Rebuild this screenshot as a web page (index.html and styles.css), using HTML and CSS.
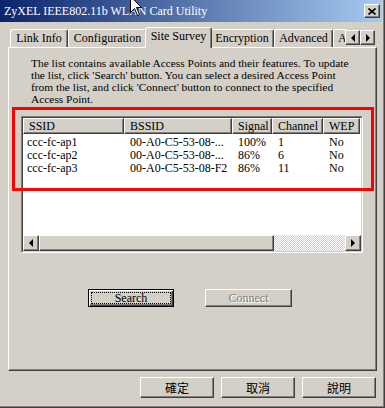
FILE: index.html
```html
<html>
    <head>
        <title>ZyXEL IEEE802.11b WLAN Card Utility</title>
        <link rel="stylesheet" href="styles.css">
    </head>
    <body>
        <div class="window">
            <div class="titlebar">
                <span class="title">ZyXEL IEEE802.11b WLAN Card Utility</span>
                <span class="close-btn">
                    <svg width="8" height="7" viewBox="0 0 8 7"><path d="M0.5 0.5 L7.5 6.5 M7.5 0.5 L0.5 6.5" stroke="#000" stroke-width="1.6" fill="none"/></svg>
                </span>
            </div>

            <div class="tabstrip">
                <div class="tabs">
                    <div class="tab w-link">Link Info</div>
                    <div class="tab w-config">Configuration</div>
                    <div class="tab selected">Site Survey</div>
                    <div class="tab w-enc">Encryption</div>
                    <div class="tab w-adv">Advanced</div>
                    <div class="tab w-about">A</div>
                </div>
                <div class="tab-scroll">
                    <span class="arrow-btn"><i class="tri-left"></i></span>
                    <span class="arrow-btn"><i class="tri-right"></i></span>
                </div>
            </div>

            <div class="panel">
                <p class="intro">The list contains available Access Points and their features. To update<br>the list, click 'Search' button. You can select a desired Access Point<br>from the list, and click 'Connect' button to connect to the specified<br>Access Point.</p>

                <div class="listview">
                    <div class="lv-inner">
                        <div class="lv-header cols">
                            <span class="hcell">SSID</span>
                            <span class="hcell">BSSID</span>
                            <span class="hcell">Signal</span>
                            <span class="hcell">Channel</span>
                            <span class="hcell">WEP</span>
                        </div>
                        <div class="lv-body">
                            <div class="row cols">
                                <span class="first">ccc-fc-ap1</span><span>00-A0-C5-53-08-...</span><span>100%</span><span>1</span><span>No</span>
                            </div>
                            <div class="row cols">
                                <span class="first">ccc-fc-ap2</span><span>00-A0-C5-53-08-...</span><span>86%</span><span>6</span><span>No</span>
                            </div>
                            <div class="row cols">
                                <span class="first">ccc-fc-ap3</span><span>00-A0-C5-53-08-F2</span><span>86%</span><span>11</span><span>No</span>
                            </div>
                        </div>
                        <div class="hscroll">
                            <span class="arrow-btn sb"><i class="tri-left"></i></span>
                            <span class="thumb"></span>
                            <span class="track"></span>
                            <span class="arrow-btn sb"><i class="tri-right"></i></span>
                        </div>
                    </div>
                </div>

                <div class="actions">
                    <button class="btn default"><span class="focus">Search</span></button>
                    <button class="btn disabled">Connect</button>
                </div>
            </div>

            <div class="dialog-buttons">
                <button class="btn cjk">確定</button>
                <button class="btn cjk">取消</button>
                <button class="btn cjk">說明</button>
            </div>

            <!-- annotation drawn over the list -->
            <div class="highlight"></div>
            <svg class="cursor" width="13" height="21" viewBox="0 0 13 21">
                <path d="M0.5 0.5 L0.5 16.5 L4.5 12.5 L7.5 19.5 L9.5 18.5 L6.5 11.5 L11.5 11.5 Z" fill="#fff" stroke="#000" stroke-width="1"/>
            </svg>
        </div>
    </body>
</html>
```

FILE: styles.css
```css
* {
    box-sizing: border-box;
}
body {
    margin: 0;
    background: #d4d0c8;
    font-family: "Liberation Serif", "Noto Sans CJK TC", serif;
    font-size: 12px;
    color: #000;
}
.window {
    position: relative;
    width: 385px;
    height: 408px;
    overflow: hidden;
    border-right: 1px solid #404040;
    border-bottom: 1px solid #404040;
    box-shadow: inset -1px -1px #808080;
}
.titlebar {
    display: flex;
    align-items: center;
    width: 382px;
    height: 22px;
    padding-left: 4px;
    background: linear-gradient(to right, #0a246a, #a6caf0);
    color: #fff;
}
.title {
    font-size: 12px;
    padding-top: 1px;
}
.close-btn {
    display: flex;
    align-items: center;
    justify-content: center;
    margin-left: auto;
    margin-right: 2px;
    width: 16px;
    height: 14px;
    background: #d4d0c8;
    border: 1px solid;
    border-color: #fff #404040 #404040 #fff;
    box-shadow: inset -1px -1px #808080;
}

/* tabs */
.tabstrip {
    position: relative;
    z-index: 1;
    display: flex;
    margin: 5px 0 -1px 10px;
    height: 21px;
}
.tabs {
    display: flex;
    align-items: flex-start;
    width: 336px;
    height: 21px;
    overflow: hidden;
}
.tab {
    flex-shrink: 0;
    height: 18px;
    margin-top: 2px;
    line-height: 16px;
    text-align: center;
    background: #d4d0c8;
    border-top: 1px solid #fff;
    border-left: 1px solid #fff;
    border-right: 1px solid #404040;
    border-radius: 3px 3px 0 0;
    box-shadow: inset -1px 0 #808080;
    white-space: nowrap;
}
.w-link { width: 58px; }
.w-config { width: 79px; }
.w-enc { width: 64px; }
.w-adv { width: 59px; }
.w-about { width: 60px; text-align: left; padding-left: 4px; }
.tab.selected {
    position: relative;
    z-index: 2;
    width: 67px;
    height: 21px;
    margin: 0 -2px;
    line-height: 17px;
}
.tab-scroll {
    display: flex;
    margin: 3px 0 0 -1px;
    height: 15px;
}
.arrow-btn {
    display: flex;
    align-items: center;
    justify-content: center;
    width: 15px;
    height: 15px;
    background: #d4d0c8;
    border: 1px solid;
    border-color: #fff #404040 #404040 #fff;
    box-shadow: inset -1px -1px #808080;
}
.tri-left {
    width: 0;
    height: 0;
    border-top: 4px solid transparent;
    border-bottom: 4px solid transparent;
    border-right: 4px solid #000;
}
.tri-right {
    width: 0;
    height: 0;
    border-top: 4px solid transparent;
    border-bottom: 4px solid transparent;
    border-left: 4px solid #000;
}

/* page */
.panel {
    margin-left: 8px;
    width: 369px;
    height: 324px;
    padding: 9px 13px 0 12px;
    border: 1px solid;
    border-color: #fff #404040 #404040 #fff;
    box-shadow: inset -1px -1px #808080;
}
.intro {
    margin: 0 0 11px 10px;
    font-size: 11.4px;
    line-height: 12px;
    white-space: nowrap;
}
.listview {
    height: 137px;
    border: 1px solid;
    border-color: #808080 #fff #fff #808080;
}
.lv-inner {
    display: flex;
    flex-direction: column;
    height: 100%;
    background: #fff;
    border: 1px solid;
    border-color: #404040 #d4d0c8 #d4d0c8 #404040;
}
.cols {
    display: grid;
    grid-template-columns: 101px 108px 40px 51px 37px;
}
.lv-header {
    height: 16px;
}
.hcell {
    background: #d4d0c8;
    line-height: 14px;
    padding-left: 5px;
    border-top: 1px solid #fff;
    border-left: 1px solid #fff;
    border-right: 1px solid #404040;
    border-bottom: 1px solid #404040;
    box-shadow: inset -1px -1px #808080;
    white-space: nowrap;
}
.lv-body {
    flex: 1;
    padding-top: 2px;
}
.row {
    height: 13px;
    line-height: 13px;
    white-space: nowrap;
}
.row span {
    padding-left: 6px;
}
.row span.first {
    padding-left: 4px;
}
.hscroll {
    display: flex;
    height: 16px;
}
.arrow-btn.sb {
    width: 16px;
    height: 16px;
}
.thumb {
    width: 235px;
    background: #d4d0c8;
    border: 1px solid;
    border-color: #fff #404040 #404040 #fff;
    box-shadow: inset -1px -1px #808080;
}
.track {
    flex: 1;
    background: repeating-conic-gradient(#fff 0 25%, #d4d0c8 0 50%);
    background-size: 2px 2px;
}

/* buttons */
.btn {
    font-family: "Liberation Serif", "Noto Sans CJK TC", serif;
    font-size: 12px;
    color: #000;
    background: #d4d0c8;
    border: 1px solid;
    border-color: #fff #404040 #404040 #fff;
    box-shadow: inset -1px -1px #808080;
    padding: 0;
    line-height: 14px;
}
.actions {
    display: flex;
    gap: 31px;
    margin: 36px 0 0 67px;
}
.actions .btn {
    width: 87px;
    height: 18px;
}
.btn.default {
    width: 86px;
    border: 1px solid #000;
    box-shadow: inset 1px 1px #fff, inset -1px -1px #404040, inset -2px -2px #808080;
    padding: 2px;
}
.focus {
    display: block;
    height: 100%;
    line-height: 11px;
    border: 1px dotted #000;
}
.btn.disabled {
    color: #808080;
    text-shadow: 1px 1px #fff;
}
.dialog-buttons {
    display: flex;
    justify-content: flex-end;
    gap: 7px;
    margin-top: 6px;
    padding-right: 8px;
}
.btn.cjk {
    width: 74px;
    height: 21px;
    font-family: "Noto Sans CJK TC", sans-serif;
    line-height: 17px;
}

/* overlays */
.highlight {
    position: absolute;
    left: 12px;
    top: 107px;
    width: 362px;
    height: 84px;
    border: 3px solid #f00;
}
.cursor {
    position: absolute;
    left: 130px;
    top: -4px;
}
```
